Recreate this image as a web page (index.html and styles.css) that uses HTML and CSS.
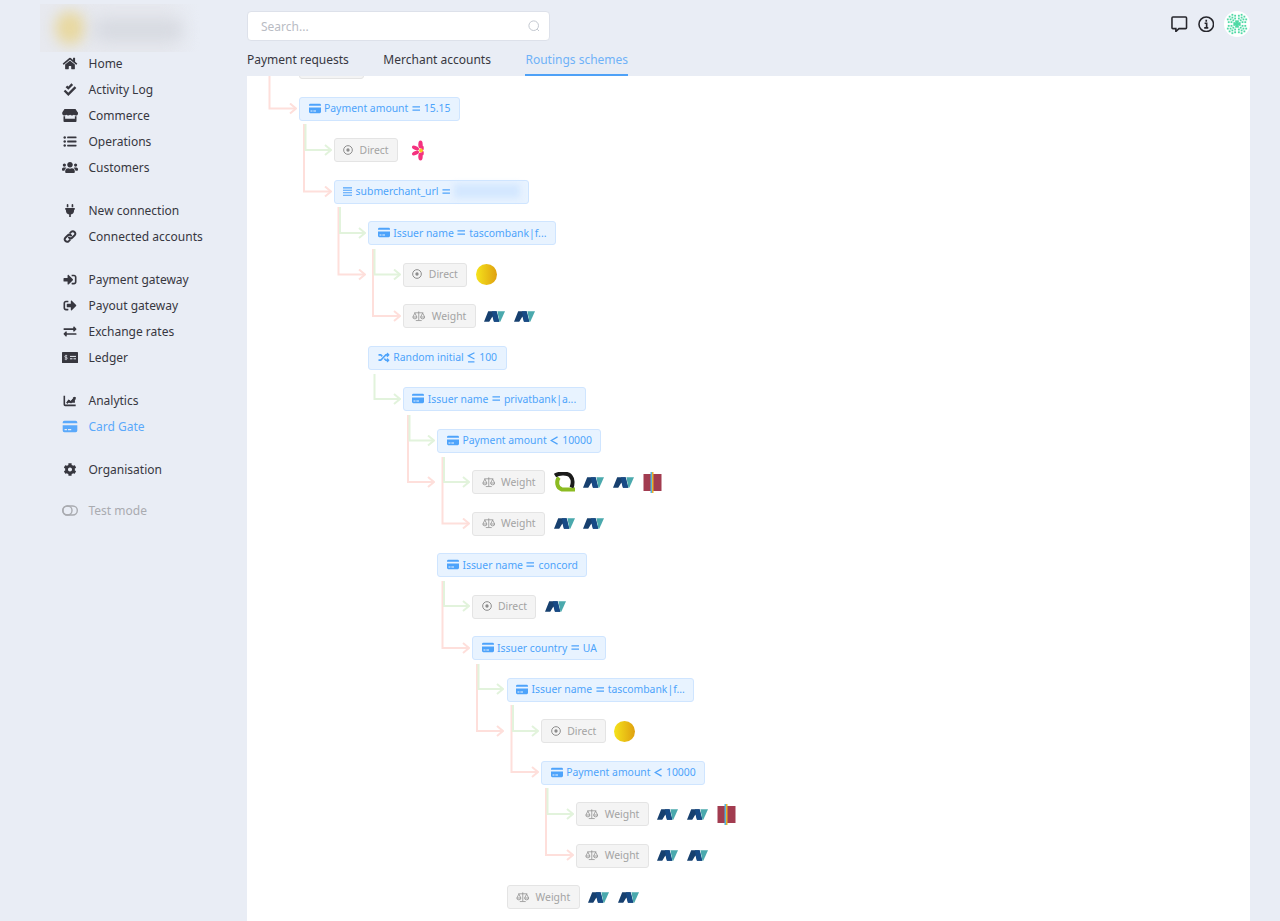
FILE: index.html
```html
<!DOCTYPE html>
<html lang="en">

<head>
    <meta charset="UTF-8">
    <meta name="viewport" content="width=device-width, initial-scale=1.0">
    <title>Routings schemes</title>
    <link rel="stylesheet" href="styles.css">
</head>

<body>
    <!-- icon sprite -->
    <svg class="sprite" xmlns="http://www.w3.org/2000/svg">
        <symbol id="i-home" viewBox="0 0 576 512"><path d="M280.37 148.26L96 300.11V464a16 16 0 0 0 16 16l112.06-.29a16 16 0 0 0 15.92-16V368a16 16 0 0 1 16-16h64a16 16 0 0 1 16 16v95.64a16 16 0 0 0 16 16.05L464 480a16 16 0 0 0 16-16V300L295.67 148.26a12.19 12.19 0 0 0-15.3 0zM571.6 251.47L488 182.56V44.05a12 12 0 0 0-12-12h-56a12 12 0 0 0-12 12v72.61L318.47 43a48 48 0 0 0-61 0L4.34 251.47a12 12 0 0 0-1.6 16.9l25.5 31A12 12 0 0 0 45.15 301l235.22-193.74a12.19 12.19 0 0 1 15.3 0L530.9 301a12 12 0 0 0 16.9-1.6l25.5-31a12 12 0 0 0-1.7-16.93z"/></symbol>
        <symbol id="i-check" viewBox="0 0 512 512"><path d="M40 295L190 445L472 165M115 130L190 205L345 45" fill="none" stroke="currentColor" stroke-width="92"/></symbol>
        <symbol id="i-store" viewBox="0 0 616 512"><path d="M602 118.6L537.1 15C531.3 5.7 521 0 510 0H106C95 0 84.7 5.7 78.9 15L14 118.6c-33.9 54.1-3.8 129.3 59.6 137.9 4.6.6 9.2.9 13.7.9 30 0 56.6-13.2 74.9-33.6 18.3 20.4 45 33.6 74.9 33.6 30 0 56.6-13.2 74.9-33.6 18.3 20.4 45 33.6 74.9 33.6 30 0 56.5-13.2 74.9-33.6 18.4 20.4 45 33.6 74.9 33.6 4.6 0 9.1-.3 13.7-.9 63.6-8.5 93.7-83.7 59.7-137.9zM529.5 288c-10 0-19.9-1.5-29.5-3.8V384H116v-99.8c-9.6 2.2-19.5 3.8-29.5 3.8-6 0-12.1-.4-18-1.2-5.6-.8-11.1-2.1-16.4-3.6V480c0 17.7 14.3 32 32 32h448c17.7 0 32-14.3 32-32V283.2c-5.4 1.6-10.8 2.9-16.4 3.6-6.1.8-12.1 1.2-18.2 1.2z"/></symbol>
        <symbol id="i-list" viewBox="0 0 512 512"><circle cx="48" cy="96" r="48"/><circle cx="48" cy="256" r="48"/><circle cx="48" cy="416" r="48"/><rect x="144" y="60" width="368" height="72" rx="16"/><rect x="144" y="220" width="368" height="72" rx="16"/><rect x="144" y="380" width="368" height="72" rx="16"/></symbol>
        <symbol id="i-users" viewBox="0 0 640 512"><path d="M96 224c35.3 0 64-28.7 64-64s-28.7-64-64-64-64 28.7-64 64 28.7 64 64 64zm448 0c35.3 0 64-28.7 64-64s-28.7-64-64-64-64 28.7-64 64 28.7 64 64 64zm32 32h-64c-17.6 0-33.5 7.1-45.1 18.6 40.3 22.1 68.9 62 75.1 109.4h66c17.7 0 32-14.3 32-32v-32c0-35.3-28.7-64-64-64zm-256 0c61.9 0 112-50.1 112-112S381.9 32 320 32 208 82.1 208 144s50.1 112 112 112zm76.8 32h-8.3c-20.8 10-43.9 16-68.5 16s-47.6-6-68.5-16h-8.3C179.6 288 128 339.6 128 403.2V432c0 26.5 21.5 48 48 48h288c26.5 0 48-21.5 48-48v-28.8c0-63.6-51.6-115.2-115.2-115.2zm-223.7-13.4C161.5 263.1 145.6 256 128 256H64c-35.3 0-64 28.7-64 64v32c0 17.7 14.3 32 32 32h65.9c6.3-47.4 34.9-87.3 75.2-109.4z"/></symbol>
        <symbol id="i-plug" viewBox="0 0 384 512"><path d="M320,32a32,32,0,0,0-64,0v96h64Zm48,128H16A16,16,0,0,0,0,176v32a16,16,0,0,0,16,16H32v32A160.07,160.07,0,0,0,160,412.8V512h64V412.8A160.07,160.07,0,0,0,352,256V224h16a16,16,0,0,0,16-16V176A16,16,0,0,0,368,160ZM128,32a32,32,0,0,0-64,0v96h64Z"/></symbol>
        <symbol id="i-link" viewBox="0 0 512 512"><g fill="none" stroke="currentColor" stroke-width="76" stroke-linecap="round"><path d="M215 297a95 95 0 0 0 134 0l90-90a95 95 0 0 0-134-134l-40 40"/><path d="M297 215a95 95 0 0 0-134 0l-90 90a95 95 0 0 0 134 134l40-40"/></g></symbol>
        <symbol id="i-signin" viewBox="0 0 512 512"><path d="M416 448h-84c-6.6 0-12-5.4-12-12v-40c0-6.6 5.4-12 12-12h84c17.7 0 32-14.3 32-32V160c0-17.7-14.3-32-32-32h-84c-6.6 0-12-5.4-12-12V76c0-6.6 5.4-12 12-12h84c53 0 96 43 96 96v192c0 53-43 96-96 96zm-47-201L201 79c-15-15-41-4.5-41 17v96H24c-13.3 0-24 10.7-24 24v96c0 13.3 10.7 24 24 24h136v96c0 21.5 26 32 41 17l168-168c9.3-9.4 9.3-24.6 0-34z"/></symbol>
        <symbol id="i-signout" viewBox="0 0 512 512"><path d="M497 273L329 441c-15 15-41 4.5-41-17v-96H152c-13.3 0-24-10.7-24-24v-96c0-13.3 10.7-24 24-24h136V88c0-21.4 25.9-32 41-17l168 168c9.3 9.4 9.3 24.6 0 34zM192 436v-40c0-6.6-5.4-12-12-12H96c-17.7 0-32-14.3-32-32V160c0-17.7 14.3-32 32-32h84c6.6 0 12-5.4 12-12V76c0-6.6-5.4-12-12-12H96c-53 0-96 43-96 96v192c0 53 43 96 96 96h84c6.6 0 12-5.4 12-12z"/></symbol>
        <symbol id="i-exchange" viewBox="0 0 512 512"><path d="M0 168v-16c0-13.255 10.745-24 24-24h360V80c0-21.367 25.899-32.042 40.971-16.971l80 80c9.372 9.373 9.372 24.569 0 33.941l-80 80C409.956 271.982 384 261.456 384 240v-48H24c-13.255 0-24-10.745-24-24zm488 152H128v-48c0-21.314-25.862-32.08-40.971-16.971l-80 80c-9.372 9.373-9.372 24.569 0 33.941l80 80C102.057 463.997 128 453.437 128 432v-48h360c13.255 0 24-10.745 24-24v-16c0-13.255-10.745-24-24-24z"/></symbol>
        <symbol id="i-ledger" viewBox="0 0 16 11"><rect width="16" height="11" rx=".6"/><path d="M8 4.400h6M8 6.800h2.500M11.500 6.800h2.500" stroke="#e9edf5" stroke-width="1"/><path d="M5.200 3.700H3.600a.8.8 0 0 0 0 1.700h.8a.8.8 0 0 1 0 1.700H2.700M4 2.800v5.400" fill="none" stroke="#e9edf5" stroke-width=".7"/></symbol>
        <symbol id="i-chart" viewBox="0 0 512 512"><path d="M32 64v352a32 32 0 0 0 32 32h416" fill="none" stroke="currentColor" stroke-width="62"/><path d="M110 330l90-112 86 60 110-130-34-34h120v120l-34-34-150 176-88-62-60 76z"/><path d="M110 340l90-112 86 60 164-190v250H110z"/></symbol>
        <symbol id="i-card" viewBox="0 0 576 512"><path fill-rule="evenodd" d="M64 32h448a64 64 0 0 1 64 64v32H0V96a64 64 0 0 1 64-64zM0 208h576v208a64 64 0 0 1-64 64H64a64 64 0 0 1-64-64zM72 352v48h96v-48zm136 0v48h128v-48z"/></symbol>
        <symbol id="i-cog" viewBox="0 0 512 512"><path d="M487.4 315.7l-42.6-24.6c4.3-23.2 4.3-47 0-70.2l42.6-24.6c4.9-2.8 7.1-8.6 5.5-14-11.1-35.6-30-67.8-54.7-94.6-3.8-4.1-10-5.1-14.8-2.3L380.8 110c-17.9-15.4-38.5-27.3-60.8-35.1V25.8c0-5.6-3.9-10.5-9.4-11.7-36.7-8.2-74.3-7.8-109.2 0-5.5 1.2-9.4 6.1-9.4 11.7V75c-22.2 7.9-42.8 19.8-60.8 35.1L88.7 85.5c-4.9-2.8-11-1.9-14.8 2.3-24.7 26.7-43.6 58.9-54.7 94.6-1.7 5.4.6 11.2 5.5 14L67.3 221c-4.3 23.2-4.3 47 0 70.2l-42.6 24.6c-4.9 2.8-7.1 8.6-5.5 14 11.1 35.6 30 67.8 54.7 94.6 3.8 4.1 10 5.1 14.8 2.3l42.6-24.6c17.9 15.4 38.5 27.3 60.8 35.1v49.2c0 5.6 3.9 10.5 9.4 11.7 36.7 8.2 74.3 7.8 109.2 0 5.5-1.2 9.4-6.1 9.4-11.7v-49.2c22.2-7.9 42.8-19.8 60.8-35.1l42.6 24.6c4.9 2.8 11 1.9 14.8-2.3 24.7-26.7 43.6-58.9 54.7-94.6 1.5-5.5-.7-11.3-5.6-14.1zM256 336c-44.1 0-80-35.9-80-80s35.9-80 80-80 80 35.9 80 80-35.9 80-80 80z"/></symbol>
        <symbol id="i-toggle" viewBox="0 0 16 11"><g fill="none" stroke="currentColor" stroke-width="1.400"><rect x=".7" y="1" width="14.600" height="9" rx="4.500"/><circle cx="5.500" cy="5.500" r="4.500"/></g></symbol>
        <symbol id="i-bars" viewBox="0 0 10 11"><path d="M0 1.500h10M0 4.200h10M0 6.900h10M0 9.600h10" stroke="currentColor" stroke-width="1.200"/></symbol>
        <symbol id="i-random" viewBox="0 0 512 512"><path d="M504.971 359.029c9.373 9.373 9.373 24.569 0 33.941l-80 79.984c-15.01 15.01-40.971 4.49-40.971-16.971V416h-58.785a12.004 12.004 0 0 1-8.773-3.812l-70.556-75.596 53.333-57.143L352 352h32v-39.981c0-21.438 25.943-31.998 40.971-16.971l80 79.981zM12 176h84l52.781 56.551 53.333-57.143-70.556-75.596A11.999 11.999 0 0 0 122.785 96H12c-6.627 0-12 5.373-12 12v56c0 6.627 5.373 12 12 12zm372 0v39.984c0 21.46 25.961 31.98 40.971 16.971l80-79.984c9.373-9.373 9.373-24.569 0-33.941l-80-79.981C409.943 24.021 384 34.582 384 56.019V96h-58.785a12.004 12.004 0 0 0-8.773 3.812L96 336H12c-6.627 0-12 5.373-12 12v56c0 6.627 5.373 12 12 12h110.785c3.326 0 6.503-1.381 8.773-3.812L352 176h32z"/></symbol>
        <symbol id="i-dot" viewBox="0 0 12 12"><circle cx="6" cy="6" r="5.200" fill="none" stroke="currentColor" stroke-width="1.200"/><circle cx="6" cy="6" r="2"/></symbol>
        <symbol id="i-scale" viewBox="0 0 16 12"><g fill="none" stroke="currentColor" stroke-width=".9"><path d="M8 .5v10.500M4.500 11.400h7M2.600 2.200h10.800"/><path d="M3.400 2.600L1 7.200a2.400 2.200 0 0 0 4.800 0zM12.600 2.600L10.200 7.200a2.400 2.200 0 0 0 4.800 0zM1 7.200h4.800M10.200 7.200H15"/></g></symbol>
        <symbol id="op-eq" viewBox="0 0 9 10"><path d="M.5 3.300h8M.5 6.700h8" stroke="currentColor" stroke-width="1.500"/></symbol>
        <symbol id="op-lt" viewBox="0 0 9 10"><path d="M8 1.200L1.300 5 8 8.800" fill="none" stroke="currentColor" stroke-width="1.400"/></symbol>
        <symbol id="op-lte" viewBox="0 0 9 12"><path d="M8 .8L1.300 4.200 8 7.600M1 10.800h7" fill="none" stroke="currentColor" stroke-width="1.300"/></symbol>
        <symbol id="logo-n" viewBox="0 0 20 12">
            <path d="M4 1H12L14.500 11H9.500L8 6L5 11H0z" fill="#17406f"/>
            <path d="M7.500 1h4.500l2.500 10h-5z" fill="#174a86"/>
            <path d="M12.800 1H20L15.500 11H14.700z" fill="#4aa9ad"/>
        </symbol>
        <symbol id="logo-coin" viewBox="0 0 21 21">
            <defs><linearGradient id="coin-g" x1="0" x2="1" y1="0" y2="0"><stop offset="0" stop-color="#f5e31c"/><stop offset="1" stop-color="#dfa00f"/></linearGradient></defs>
            <circle cx="10.500" cy="10.500" r="10.500" fill="url(#coin-g)"/>
        </symbol>
        <symbol id="logo-flower" viewBox="0 0 21 21">
            <g fill="#f5327f">
                <ellipse cx="13.500" cy="4.500" rx="2.200" ry="4"/>
                <ellipse cx="13.500" cy="16.500" rx="2.200" ry="4"/>
                <ellipse cx="8.500" cy="8" rx="3.800" ry="1.900" transform="rotate(25 8.500 8)"/>
                <ellipse cx="8.500" cy="13" rx="3.800" ry="1.900" transform="rotate(-25 8.500 13)"/>
                <ellipse cx="15.500" cy="8" rx="1.300" ry="2.600"/>
                <ellipse cx="15.500" cy="13" rx="1.300" ry="2.600"/>
            </g>
            <circle cx="14" cy="10.500" r="1.900" fill="#f6cf1d"/>
        </symbol>
        <symbol id="logo-swirl" viewBox="0 0 21 21">
            <path d="M5 5.500C2 9 2.500 16 8 17.500H21" fill="none" stroke="#8cbb22" stroke-width="4"/>
            <path d="M1 3.500C5 .8 14 .8 16.500 4c2.500 3 2.500 8 1 11.500" fill="none" stroke="#1b1b1b" stroke-width="4"/>
        </symbol>
        <symbol id="logo-book" viewBox="0 0 18 21">
            <rect y="2" width="18" height="17" fill="#a23c50"/>
            <rect x="7" width="1.500" height="21" fill="#55b4dc"/>
            <rect x="8.500" width="1.500" height="21" fill="#e8b22c"/>
        </symbol>
    </svg>

    <aside class="sidebar">
        <div class="brand"><span class="brand-mark"></span><span class="brand-text"></span></div>
        <nav class="menu">
            <ul class="menu-group">
                <li class="menu-item"><svg class="menu-icon"><use href="#i-home"/></svg>Home</li>
                <li class="menu-item"><svg class="menu-icon"><use href="#i-check"/></svg>Activity Log</li>
                <li class="menu-item"><svg class="menu-icon"><use href="#i-store"/></svg>Commerce</li>
                <li class="menu-item"><svg class="menu-icon"><use href="#i-list"/></svg>Operations</li>
                <li class="menu-item"><svg class="menu-icon"><use href="#i-users"/></svg>Customers</li>
            </ul>
            <ul class="menu-group">
                <li class="menu-item"><svg class="menu-icon"><use href="#i-plug"/></svg>New connection</li>
                <li class="menu-item"><svg class="menu-icon"><use href="#i-link"/></svg>Connected accounts</li>
            </ul>
            <ul class="menu-group">
                <li class="menu-item"><svg class="menu-icon"><use href="#i-signin"/></svg>Payment gateway</li>
                <li class="menu-item"><svg class="menu-icon"><use href="#i-signout"/></svg>Payout gateway</li>
                <li class="menu-item"><svg class="menu-icon"><use href="#i-exchange"/></svg>Exchange rates</li>
                <li class="menu-item"><svg class="menu-icon"><use href="#i-ledger"/></svg>Ledger</li>
            </ul>
            <ul class="menu-group">
                <li class="menu-item"><svg class="menu-icon"><use href="#i-chart"/></svg>Analytics</li>
                <li class="menu-item active"><svg class="menu-icon"><use href="#i-card"/></svg>Card Gate</li>
            </ul>
            <ul class="menu-group">
                <li class="menu-item"><svg class="menu-icon"><use href="#i-cog"/></svg>Organisation</li>
            </ul>
            <ul class="menu-group test-group">
                <li class="menu-item muted"><svg class="menu-icon"><use href="#i-toggle"/></svg>Test mode</li>
            </ul>
        </nav>
    </aside>

    <main class="main">
        <header class="topbar">
            <div class="search">
                <span class="search-text">Search...</span>
                <svg class="search-icon" viewBox="0 0 12 12"><circle cx="5.700" cy="5.700" r="4.800"/><path d="M9.200 9.200l1.800 1.800"/></svg>
            </div>
            <div class="top-icons">
                <svg class="top-icon" viewBox="0 0 17 17"><path d="M2 1h13a1 1 0 0 1 1 1v10a1 1 0 0 1-1 1H8.200L5 16v-3H2a1 1 0 0 1-1-1V2a1 1 0 0 1 1-1z"/></svg>
                <svg class="top-icon" viewBox="0 0 17 17"><circle cx="8.500" cy="8.500" r="7.500"/><path class="info-i" d="M6.800 7.500h2.100v4.500M6.400 12.300h4.200M8.500 3.800v2"/></svg>
                <span class="avatar">
                    <svg viewBox="-13 -13 26 26" width="26" height="26">
                        <defs>
                            <g id="av-q">
                                <rect x="0" y="2" width="2" height="2"/><rect x="2" y="0" width="2" height="2"/>
                                <rect x="3" y="3" width="2" height="2"/><rect x="5" y="1" width="2" height="2"/>
                                <rect x="1" y="5" width="2" height="2"/><rect x="6" y="4" width="2" height="2"/>
                                <rect x="4" y="6" width="2" height="2"/><rect x="8" y="1" width="2" height="2"/>
                                <rect x="1" y="8" width="2" height="2"/><rect x="7" y="7" width="2" height="2"/>
                                <rect x="9" y="4" width="2" height="2"/><rect x="4" y="9" width="2" height="2"/>
                            </g>
                        </defs>
                        <g class="avatar-dots" transform="scale(.92)">
                            <use href="#av-q"/>
                            <use href="#av-q" transform="scale(-1 1)"/>
                            <use href="#av-q" transform="scale(1 -1)"/>
                            <use href="#av-q" transform="scale(-1 -1)"/>
                            <circle r="2.500"/>
                        </g>
                    </svg>
                </span>
            </div>
        </header>

        <nav class="tabs">
            <span class="tab">Payment requests</span>
            <span class="tab">Merchant accounts</span>
            <span class="tab current">Routings schemes</span>
        </nav>

        <section class="panel">
            <!-- connector lines, drawn in page coordinates -->
            <svg class="links" viewBox="247 76 1003 845">
                <defs>
                    <marker id="tip-red" markerWidth="8" markerHeight="12" refX="7" refY="6" orient="auto" markerUnits="userSpaceOnUse"><path d="M1 1l6 5-6 5" fill="none" stroke="#fedfdb" stroke-width="1.500"/></marker>
                    <marker id="tip-green" markerWidth="8" markerHeight="12" refX="7" refY="6" orient="auto" markerUnits="userSpaceOnUse"><path d="M1 1l6 5-6 5" fill="none" stroke="#e2f3dc" stroke-width="1.500"/></marker>
                </defs>
                <g class="no">
                    <path marker-end="url(#tip-red)" d="M269.500 76V108.500H296"/>
                    <path marker-end="url(#tip-red)" d="M304 124V191.500H331"/>
                    <path marker-end="url(#tip-red)" d="M338.500 207V274.500H365"/>
                    <path marker-end="url(#tip-red)" d="M373 249V316H400"/>
                    <path marker-end="url(#tip-red)" d="M408 415V482H434"/>
                    <path marker-end="url(#tip-red)" d="M442.500 457V523.500H469"/>
                    <path marker-end="url(#tip-red)" d="M442.500 581V648H469"/>
                    <path marker-end="url(#tip-red)" d="M477 664V731H503"/>
                    <path marker-end="url(#tip-red)" d="M511.500 705V772H538"/>
                    <path marker-end="url(#tip-red)" d="M546 788V855H573"/>
                </g>
                <g class="yes">
                    <path marker-end="url(#tip-green)" d="M305.500 124V150H331"/>
                    <path marker-end="url(#tip-green)" d="M340 207V233H365"/>
                    <path marker-end="url(#tip-green)" d="M374.500 249V274.500H400"/>
                    <path marker-end="url(#tip-green)" d="M374.500 374V399H400"/>
                    <path marker-end="url(#tip-green)" d="M409.500 415V440.500H434"/>
                    <path marker-end="url(#tip-green)" d="M444 457V482H469"/>
                    <path marker-end="url(#tip-green)" d="M444 581V606H469"/>
                    <path marker-end="url(#tip-green)" d="M478.500 664V689H503"/>
                    <path marker-end="url(#tip-green)" d="M513 705V731H538"/>
                    <path marker-end="url(#tip-green)" d="M547.500 788V814H573"/>
                </g>
            </svg>

            <div class="tree">
                <div class="row lvl-0"><span class="node plain cut-node"></span></div>
                <div class="row lvl-0"><span class="node rule"><svg class="node-icon"><use href="#i-card"/></svg>Payment amount<svg class="op"><use href="#op-eq"/></svg>15.15</span></div>
                <div class="row lvl-1"><span class="node plain"><svg class="node-icon"><use href="#i-dot"/></svg>Direct</span><svg class="logo"><use href="#logo-flower"/></svg></div>
                <div class="row lvl-1"><span class="node rule"><svg class="node-icon narrow"><use href="#i-bars"/></svg>submerchant_url<svg class="op"><use href="#op-eq"/></svg><span class="blurred"></span></span></div>
                <div class="row lvl-2"><span class="node rule"><svg class="node-icon"><use href="#i-card"/></svg>Issuer name<svg class="op"><use href="#op-eq"/></svg>tascombank|f...</span></div>
                <div class="row lvl-3"><span class="node plain"><svg class="node-icon"><use href="#i-dot"/></svg>Direct</span><svg class="logo"><use href="#logo-coin"/></svg></div>
                <div class="row lvl-3"><span class="node plain"><svg class="node-icon wide"><use href="#i-scale"/></svg>Weight</span><svg class="logo"><use href="#logo-n"/></svg><svg class="logo"><use href="#logo-n"/></svg></div>
                <div class="row lvl-2"><span class="node rule"><svg class="node-icon"><use href="#i-random"/></svg>Random initial<svg class="op"><use href="#op-lte"/></svg>100</span></div>
                <div class="row lvl-3"><span class="node rule"><svg class="node-icon"><use href="#i-card"/></svg>Issuer name<svg class="op"><use href="#op-eq"/></svg>privatbank|a...</span></div>
                <div class="row lvl-4"><span class="node rule"><svg class="node-icon"><use href="#i-card"/></svg>Payment amount<svg class="op"><use href="#op-lt"/></svg>10000</span></div>
                <div class="row lvl-5"><span class="node plain"><svg class="node-icon wide"><use href="#i-scale"/></svg>Weight</span><svg class="logo"><use href="#logo-swirl"/></svg><svg class="logo"><use href="#logo-n"/></svg><svg class="logo"><use href="#logo-n"/></svg><svg class="logo"><use href="#logo-book"/></svg></div>
                <div class="row lvl-5"><span class="node plain"><svg class="node-icon wide"><use href="#i-scale"/></svg>Weight</span><svg class="logo"><use href="#logo-n"/></svg><svg class="logo"><use href="#logo-n"/></svg></div>
                <div class="row lvl-4"><span class="node rule"><svg class="node-icon"><use href="#i-card"/></svg>Issuer name<svg class="op"><use href="#op-eq"/></svg>concord</span></div>
                <div class="row lvl-5"><span class="node plain"><svg class="node-icon"><use href="#i-dot"/></svg>Direct</span><svg class="logo"><use href="#logo-n"/></svg></div>
                <div class="row lvl-5"><span class="node rule"><svg class="node-icon"><use href="#i-card"/></svg>Issuer country<svg class="op"><use href="#op-eq"/></svg>UA</span></div>
                <div class="row lvl-6"><span class="node rule"><svg class="node-icon"><use href="#i-card"/></svg>Issuer name<svg class="op"><use href="#op-eq"/></svg>tascombank|f...</span></div>
                <div class="row lvl-7"><span class="node plain"><svg class="node-icon"><use href="#i-dot"/></svg>Direct</span><svg class="logo"><use href="#logo-coin"/></svg></div>
                <div class="row lvl-7"><span class="node rule"><svg class="node-icon"><use href="#i-card"/></svg>Payment amount<svg class="op"><use href="#op-lt"/></svg>10000</span></div>
                <div class="row lvl-8"><span class="node plain"><svg class="node-icon wide"><use href="#i-scale"/></svg>Weight</span><svg class="logo"><use href="#logo-n"/></svg><svg class="logo"><use href="#logo-n"/></svg><svg class="logo"><use href="#logo-book"/></svg></div>
                <div class="row lvl-8"><span class="node plain"><svg class="node-icon wide"><use href="#i-scale"/></svg>Weight</span><svg class="logo"><use href="#logo-n"/></svg><svg class="logo"><use href="#logo-n"/></svg></div>
                <div class="row lvl-6"><span class="node plain"><svg class="node-icon wide"><use href="#i-scale"/></svg>Weight</span><svg class="logo"><use href="#logo-n"/></svg><svg class="logo"><use href="#logo-n"/></svg></div>
            </div>
        </section>
    </main>
</body>

</html>
```

FILE: styles.css
```css
* {
    box-sizing: border-box;
}

html,
body {
    height: 100%;
}

body {
    display: flex;
    margin: 0;
    overflow: hidden;
    background-color: #e9edf5;
    color: #37373f;
    font-family: "Noto Sans", "Open Sans", sans-serif;
    font-size: 12px;
}

.sprite {
    position: absolute;
    width: 0;
    height: 0;
}

svg {
    fill: currentColor;
}

/* sidebar */
.sidebar {
    flex: 0 0 247px;
    padding: 4px 0 0 40px;
}

.brand {
    display: flex;
    width: 160px;
    height: 48px;
    overflow: hidden;
    background: linear-gradient(90deg, #e7e9ef 75%, #e9edf5);
}

.brand-mark {
    width: 30px;
    height: 34px;
    margin: 7px 0 0 15px;
    border-radius: 50%;
    background-color: #e8d8a0;
    filter: blur(7px);
}

.brand-text {
    width: 90px;
    height: 24px;
    margin: 14px 0 0 8px;
    border-radius: 10px;
    background-color: #d7dae1;
    filter: blur(8px);
}

.menu {
    margin-top: -2px;
}

.menu-group {
    margin: 0 0 17px;
    padding: 0;
    list-style: none;
}

.test-group {
    margin-top: -2px;
}

.menu-item {
    display: flex;
    align-items: center;
    height: 26px;
    margin-left: 22px;
}

.menu-item.active {
    color: #5aa9fb;
}

.menu-item.muted {
    color: #a9abb0;
}

.menu-icon {
    flex: none;
    width: 16px;
    height: 13px;
    margin-right: 10.5px;
}

/* top bar */
.main {
    display: flex;
    flex: 0 0 1003px;
    flex-direction: column;
}

.topbar {
    display: flex;
    justify-content: space-between;
    align-items: flex-start;
    height: 46px;
    padding-top: 11px;
}

.search {
    display: flex;
    justify-content: space-between;
    align-items: center;
    width: 303px;
    height: 30px;
    padding: 0 9px 0 13px;
    border: 1px solid #dde1ea;
    border-radius: 4px;
    background-color: #fff;
}

.search-text {
    color: #b9bcc4;
}

.search-icon {
    width: 12px;
    height: 12px;
    fill: none;
    stroke: #c3c8d0;
}

.top-icons {
    display: flex;
    align-items: center;
    gap: 10px;
}

.top-icon {
    width: 16.5px;
    height: 16.5px;
    fill: none;
    stroke: #26262c;
    stroke-width: 1.6;
}

.info-i {
    stroke-width: 1.7;
}

.avatar {
    display: block;
    width: 26px;
    height: 26px;
    border-radius: 50%;
    background-color: #fff;
}

.avatar-dots {
    fill: #4fd9a5;
}

/* tabs */
.tabs {
    display: flex;
    gap: 34.5px;
    height: 30px;
}

.tab {
    height: 30px;
    padding-top: 5px;
    line-height: 18px;
}

.tab.current {
    border-bottom: 2px solid #4ea1f7;
    color: #6fb2f8;
}

/* routing tree */
.panel {
    position: relative;
    flex: 1;
    overflow: hidden;
    background-color: #fff;
}

.links {
    position: absolute;
    top: 0;
    left: 0;
    width: 1003px;
    height: 845px;
}

.links path {
    fill: none;
    stroke-width: 2;
}

.no path {
    stroke: #fedfdb;
}

.yes path {
    stroke: #e2f3dc;
}

.tree {
    position: relative;
    margin-top: -29.75px;
}

.row {
    display: flex;
    align-items: center;
    height: 41.5px;
}

.lvl-0 { margin-left: 52px; }
.lvl-1 { margin-left: 86.6px; }
.lvl-2 { margin-left: 121.2px; }
.lvl-3 { margin-left: 155.8px; }
.lvl-4 { margin-left: 190.4px; }
.lvl-5 { margin-left: 225px; }
.lvl-6 { margin-left: 259.6px; }
.lvl-7 { margin-left: 294.2px; }
.lvl-8 { margin-left: 328.8px; }

.node {
    display: flex;
    flex: none;
    align-items: center;
    height: 24px;
    padding: 0 8.5px 1px;
    border: 1px solid;
    border-radius: 3px;
    font-size: 10.4px;
    white-space: nowrap;
}

.node.rule {
    border-color: #cfe5ff;
    background-color: #e8f3ff;
    color: #4da3fb;
}

.node.plain {
    border-color: #e4e4e4;
    background-color: #f4f4f4;
    color: #a3a3a3;
}

.plain .node-icon {
    margin-right: 6.5px;
    color: #8c8c8c;
}

.cut-node {
    width: 65px;
}

.node-icon {
    flex: none;
    width: 12px;
    height: 11px;
    margin-right: 3.5px;
}

.node-icon.narrow {
    width: 9px;
    height: 11px;
}

.node-icon.wide {
    width: 13.5px;
    height: 12px;
    margin-right: 6px;
}

.plain .node-icon:not(.wide) {
    width: 10px;
    height: 10px;
}

.op {
    flex: none;
    width: 8.5px;
    height: 11px;
    margin: 0 3.5px;
}

.blurred {
    width: 66px;
    height: 14px;
    background-color: #d3e7ff;
    filter: blur(3px);
}

.logo {
    flex: none;
    width: 21px;
    height: 21px;
    margin-left: 8.5px;
}
```
